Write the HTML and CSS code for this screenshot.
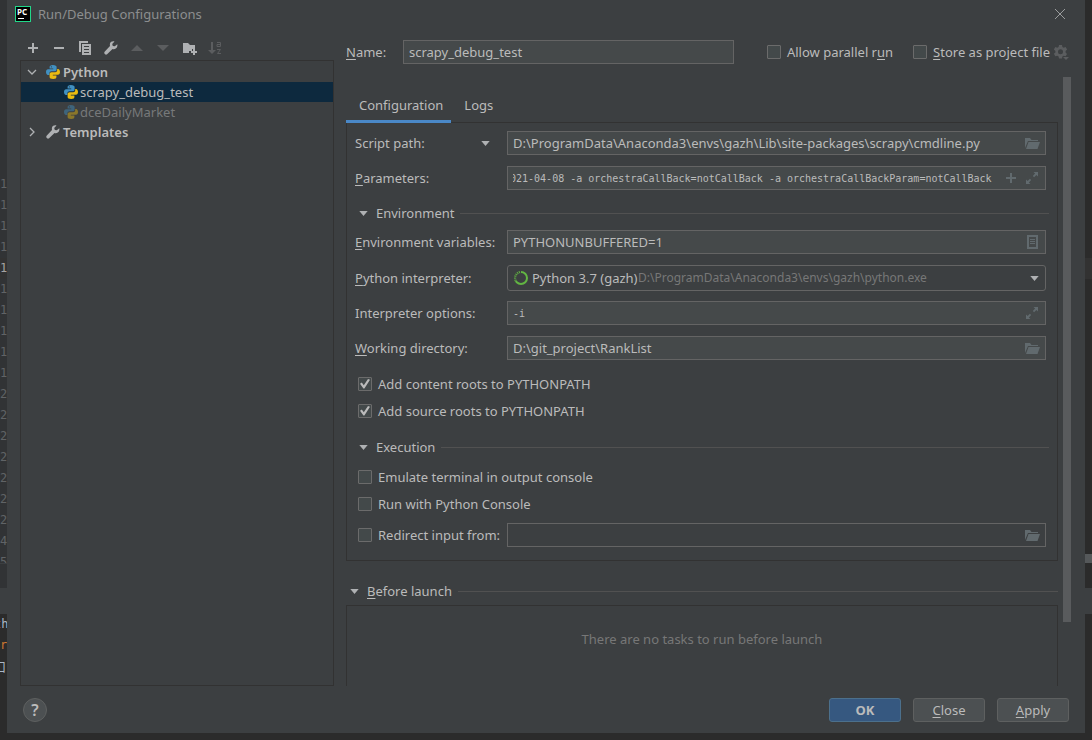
FILE: index.html
```html
<!DOCTYPE html>
<html lang="en">
<head>
<meta charset="utf-8">
<title>Run/Debug Configurations</title>
<link rel="stylesheet" href="styles.css">
</head>
<body>
<svg class="defs" aria-hidden="true">
  <symbol id="python" viewBox="0 0 16 16">
    <path fill="#4191c2" d="M7.800 1C5.400 1 4.600 2 4.600 3v1.600h3.600v.6H3.100C1.700 5.200 1 6.500 1 8s.7 3 2 3h1.400V9.300c0-1.200 1-2.100 2.100-2.100h3.300c1 0 1.800-.8 1.800-1.800V3c0-1-1-2-3.800-2z"/>
    <path fill="#eabb10" d="M8.300 15c2.300 0 3.100-1 3.100-2v-1.600H7.800v-.6h5.100C14.300 10.800 15 9.500 15 8s-.7-3-2-3h-.8v1.200c0 1.200-.9 2-2 2H6.500c-1 0-1.900.9-1.900 1.900V13c0 1 1 2 3.700 2z"/>
    <circle cx="6.400" cy="2.800" r=".6" fill="#3c3f41"/>
  </symbol>
  <symbol id="wrench" viewBox="0 0 16 16">
    <path d="M14.300 4.300l-2.500 2-2-.4-.6-2 2.300-2.400C9.600.900 7.500 1.800 7 3.600c-.3 1 0 1.800 0 2.400L1.600 11.800c-1.300 1.500.9 3.800 2.500 2.400L9.500 9c1 .3 2.400.3 3.600-.7 1.200-1 1.600-2.700 1.200-4z"/>
  </symbol>
  <symbol id="folder" viewBox="0 0 16 16">
    <path d="M1 13V3h5l1.500 2H14v1H4L1 13z"/><path d="M2 14l2.500-7H16l-2.500 7z"/>
  </symbol>
  <symbol id="expand" viewBox="0 0 16 16">
    <path d="M9.500 2H14v4.500l-1.600-1.600-2.300 2.300-1.300-1.300 2.300-2.300zM6.500 14H2V9.500l1.600 1.600 2.300-2.300 1.300 1.300-2.300 2.300z"/>
  </symbol>
  <symbol id="down" viewBox="0 0 10 6"><path d="M0 0h10L5 6z"/></symbol>
</svg>

<div class="desktop">
  <aside class="gutter">
    <ol class="lines">
      <li>1</li><li>1</li><li>1</li><li>1</li><li class="current">1</li><li>1</li><li>1</li><li>1</li><li>1</li><li>1</li>
      <li>2</li><li>2</li><li>2</li><li>2</li><li>2</li><li>2</li><li>2</li><li>4</li><li>5</li>
    </ol>
    <div class="band"></div>
    <div class="console"><div class="shifted"><b>t</b>h</div><div><b>r</b>:</div><div class="shifted cjk">口</div></div>
  </aside>

  <main class="dialog">
    <header class="title">
      <svg class="logo" viewBox="0 0 16 16"><path fill="#21d789" d="M0 0h16v16H0z"/><path fill="#000" d="M1 1h14v14H1z"/><path fill="#fff" d="M3 12h6v1H3z"/><text x="2" y="9">PC</text></svg>
      <h1>Run/Debug Configurations</h1>
      <button class="icon-button close" aria-label="Close window"><svg viewBox="0 0 12 12"><path d="M1 1l10 10M11 1L1 11"/></svg></button>
    </header>

    <div class="content">
      <section class="side">
        <div class="toolbar">
          <button class="icon-button" aria-label="Add"><svg viewBox="0 0 16 16"><path d="M7 3h2v4h4v2H9v4H7V9H3V7h4z"/></svg></button>
          <button class="icon-button" aria-label="Remove"><svg viewBox="0 0 16 16"><path d="M3 7h10v2H3z"/></svg></button>
          <button class="icon-button" aria-label="Copy"><svg viewBox="0 0 16 16"><path d="M2 1h9v2H4v9H2z"/><path fill-rule="evenodd" d="M5 4h9v11H5zM7 6v1h5V6zM7 9v1h5V9zM7 12v1h5v-1z"/></svg></button>
          <button class="icon-button" aria-label="Edit templates"><svg><use href="#wrench"/></svg></button>
          <button class="icon-button" aria-label="Move up" disabled><svg viewBox="0 0 16 16"><path d="M2 11l6-6 6 6z"/></svg></button>
          <button class="icon-button" aria-label="Move down" disabled><svg viewBox="0 0 16 16"><path d="M2 5h12l-6 6z"/></svg></button>
          <button class="icon-button" aria-label="Create folder"><svg viewBox="0 0 16 16"><path d="M2 3h5l2 2h5v4h-3v2H8v2H2z"/><path d="M12 9h2v2h2v2h-2v2h-2v-2h-2v-2h2z"/></svg></button>
          <button class="icon-button" aria-label="Sort" disabled><svg viewBox="0 0 16 16"><path d="M4 2h2v8h3l-4 4-4-4h3z"/><path class="thin" d="M10 2.500h3.500v4H10v-2h3M10 9.500h3.500l-3 4H14"/></svg></button>
        </div>
        <ul class="tree">
          <li class="group"><svg class="chevron" viewBox="0 0 10 10"><path d="M1 3l4 4 4-4"/></svg><svg class="node"><use href="#python"/></svg>Python</li>
          <li class="item selected"><svg class="node"><use href="#python"/></svg>scrapy_debug_test</li>
          <li class="item faded"><svg class="node"><use href="#python"/></svg>dceDailyMarket</li>
          <li class="group"><svg class="chevron" viewBox="0 0 10 10"><path d="M3 1l4 4-4 4"/></svg><svg class="node"><use href="#wrench"/></svg>Templates</li>
        </ul>
      </section>

      <section class="editor">
        <div class="name-row">
          <label for="name"><u>N</u>ame:</label>
          <input class="field" id="name" type="text" value="scrapy_debug_test">
          <label class="check"><input type="checkbox"><span>Allow parallel r<u>u</u>n</span></label>
          <label class="check store"><input type="checkbox"><span><u>S</u>tore as project file</span></label>
          <button class="icon-button gear" aria-label="Storage options" disabled><svg viewBox="0 0 16 16"><path fill-rule="evenodd" d="M6 1h3l.4 2 1.300.700L12.600 3l1.500 2.500L12.600 7v1.500L14 10l-1.400 2.300-2-.6-1.200.7L9 14.500H6l-.4-2.100-1.300-.7-2 .6L.9 9.800 2.400 8.500V7L.9 5.500 2.300 3l2 .7L5.600 3zM7.500 5.300a2.500 2.500 0 100 5 2.500 2.500 0 000-5z"/><path d="M10 13h6l-3 3z"/></svg></button>
        </div>

        <div class="scroll">
          <div class="page">
            <nav class="tabs"><button class="tab active">Configuration</button><button class="tab">Logs</button></nav>
            <div class="panel">
              <div class="row">
                <label class="script" for="script">Script path:<svg class="arrow"><use href="#down"/></svg></label>
                <div class="field"><input id="script" type="text" value="D:\ProgramData\Anaconda3\envs\gazh\Lib\site-packages\scrapy\cmdline.py"><svg class="trail"><use href="#folder"/></svg></div>
              </div>
              <div class="row">
                <label for="params"><u>P</u>arameters:</label>
                <div class="field"><input class="mono" id="params" type="text" value="021-04-08 -a orchestraCallBack=notCallBack -a orchestraCallBackParam=notCallBack"><svg class="trail plus" viewBox="0 0 16 16"><path d="M7 3h2v4h4v2H9v4H7V9H3V7h4z"/></svg><svg class="trail"><use href="#expand"/></svg></div>
              </div>
              <h2 class="section"><svg class="arrow"><use href="#down"/></svg>Environment</h2>
              <div class="row">
                <label for="env"><u>E</u>nvironment variables:</label>
                <div class="field"><input id="env" type="text" value="PYTHONUNBUFFERED=1"><svg class="trail" viewBox="0 0 16 16"><path fill-rule="evenodd" d="M3 1h11v14H3zM5 3v10h7V3z"/><path d="M6 5h5v1H6zM6 7h5v1H6zM6 9h5v1H6z"/></svg></div>
              </div>
              <div class="row interpreter">
                <label for="interp"><u>P</u>ython interpreter:</label>
                <div class="field combo"><svg class="ring" viewBox="0 0 16 16"><circle cx="8" cy="8" r="6"/><path d="M8 2a6 6 0 00-5.200 9"/></svg><select id="interp"><option>Python 3.7 (gazh)</option></select><span class="hint">D:\ProgramData\Anaconda3\envs\gazh\python.exe</span><svg class="arrow"><use href="#down"/></svg></div>
              </div>
              <div class="row">
                <label for="opts">Interpreter options:</label>
                <div class="field"><input class="mono" id="opts" type="text" value="-i"><svg class="trail"><use href="#expand"/></svg></div>
              </div>
              <div class="row">
                <label for="dir"><u>W</u>orking directory:</label>
                <div class="field"><input id="dir" type="text" value="D:\git_project\RankList"><svg class="trail"><use href="#folder"/></svg></div>
              </div>
              <div class="checks first">
                <label class="check"><input type="checkbox" checked><span>Add content roots to PYTHONPATH</span></label>
                <label class="check"><input type="checkbox" checked><span>Add source roots to PYTHONPATH</span></label>
              </div>
              <h2 class="section execution"><svg class="arrow"><use href="#down"/></svg>Execution</h2>
              <div class="checks">
                <label class="check"><input type="checkbox"><span>Emulate terminal in output console</span></label>
                <label class="check"><input type="checkbox"><span>Run with Python Console</span></label>
              </div>
              <div class="row redirect">
                <label class="check"><input type="checkbox"><span>Redirect input from:</span></label>
                <div class="field off"><input type="text" aria-label="Redirect input from" disabled><svg class="trail"><use href="#folder"/></svg></div>
              </div>
            </div>
            <h2 class="section before"><svg class="arrow"><use href="#down"/></svg><span><u>B</u>efore launch</span></h2>
            <div class="tasks">There are no tasks to run before launch</div>
          </div>
          <div class="bar"></div>
        </div>
      </section>
    </div>

    <footer class="footer">
      <button class="help" aria-label="Help">?</button>
      <button class="button primary">OK</button>
      <button class="button"><u>C</u>lose</button>
      <button class="button"><u>A</u>pply</button>
    </footer>
  </main>

  <aside class="edge"><div class="mark"></div><div class="split"></div><div class="header"></div></aside>
</div>
<script src="script.js"></script>
</body>
</html>
```
FILE: styles.css
```css
* { box-sizing: border-box; }
body {
  margin: 0;
  background: #2b2b2b;
  color: #bbbbbb;
  font: 13px/20px "Noto Sans", "Noto Sans CJK SC", sans-serif;
}
button, input, select { font: inherit; color: inherit; }
button { border: 0; padding: 0; background: none; }
h1, h2 { margin: 0; font: inherit; }
ul, ol { margin: 0; padding: 0; list-style: none; }
svg { fill: #afb1b3; flex: none; display: block; }
u { text-underline-offset: 2px; }
.defs { position: absolute; width: 0; height: 0; }

.desktop { display: flex; height: 100vh; padding-bottom: 7px; }

/* Editor behind the dialog */
.gutter {
  flex: 0 0 7px;
  display: flex;
  flex-direction: column;
  overflow: hidden;
  background: #313335;
  color: #606366;
  font: 12px/21px "DejaVu Sans Mono", monospace;
}
.lines { height: 564px; flex: none; padding-top: 174px; overflow: hidden; border-bottom: 1px solid #3c3f41; }
.current { color: #a4a3a3; background: #323232; }
.band { flex: none; height: 26px; margin-top: 24px; background: #3c3f41; }
.console { flex: 1; background: #2b2b2b; color: #a9b7c6; white-space: nowrap; }
.console b { color: #cc7832; font-weight: 400; }
.shifted { text-indent: -6px; }
.cjk { font-family: "Noto Sans CJK SC", sans-serif; }
.edge { flex: 0 0 7px; background: #2b2b2b; }
.edge .mark { height: 21px; margin-top: 258px; background: #323232; }
.edge .split { height: 9px; margin-top: 275px; background: #55585a; }
.edge .header { height: 26px; margin-top: 25px; background: #3c3f41; }

/* Dialog */
.dialog { flex: 1; min-width: 0; display: flex; flex-direction: column; background: #3c3f41; }
.title { display: flex; align-items: center; gap: 7px; height: 28px; padding: 0 19px 0 8px; color: #8c8e8f; }
.title h1 { flex: 1; }
.logo { width: 16px; height: 16px; }
.logo text { fill: #fff; font: bold 8px "Noto Sans", sans-serif; }
.icon-button svg { width: 16px; height: 16px; }
.icon-button:disabled svg { fill: #5b5d5f; }
.close svg { width: 12px; height: 12px; fill: none; stroke: #9a9c9d; }

.content { flex: 1; min-height: 0; display: flex; gap: 12px; padding: 0 14px 0 13px; }
.side { flex: 0 0 314px; display: flex; flex-direction: column; }
.toolbar { display: flex; align-items: center; gap: 10px; height: 32px; padding: 8px 5px 0; }
.icon-button:disabled .thin { fill: none; stroke: #5b5d5f; }
.tree { flex: 1; padding-top: 1px; border: 1px solid #323232; }
.tree li { display: flex; align-items: center; height: 20px; gap: 2px; }
.tree .group { padding-left: 6px; font-weight: 600; }
.tree .item { padding-left: 42px; gap: 1px; }
.tree .selected { background: #0d293e; }
.tree .faded { color: #77797a; }
.faded svg { opacity: .45; }
.node { width: 16px; height: 16px; }
.chevron { width: 10px; height: 10px; margin-right: 6px; fill: none; stroke: #afb1b3; stroke-width: 1.300; }

.editor { flex: 1; min-width: 0; display: flex; flex-direction: column; }
.name-row { display: flex; align-items: center; padding: 12px 2px 0 0; }
.name-row > label:first-child { width: 57px; }
.name-row > .field { flex: 1; min-width: 0; padding: 0 5px; margin-right: 33px; }
.name-row .store { margin-left: 20px; }
.gear { margin-left: 3px; }
.check { display: flex; align-items: center; gap: 6px; white-space: nowrap; }
.check input {
  appearance: none;
  display: grid;
  place-items: center;
  flex: none;
  width: 14px;
  height: 14px;
  margin: 0;
  border: 1px solid #6b6b6b;
  border-radius: 1px;
  background: #43494a;
}
.check input:checked::before {
  content: "";
  width: 10px;
  height: 10px;
  background: #bbbbbb;
  clip-path: polygon(0 48%, 18% 34%, 38% 62%, 80% 0, 100% 8%, 44% 96%, 34% 96%);
}

.field {
  display: flex;
  align-items: center;
  height: 24px;
  border: 1px solid #646464;
  background: #45494a;
}
.field input { flex: 1; min-width: 0; height: 22px; padding: 0; margin-left: 5px; border: 0; background: none; }
input:focus { outline: none; }
.field .mono { font: 10px/20px "DejaVu Sans Mono", monospace; }
.field.off { background: #3c3f41; }
.trail { width: 16px; height: 16px; margin: 0 5px 0 16px; fill: #616a6e; }
.plus { margin: 0 -11px 0 11px; }
.interpreter { margin-bottom: -1px; }
.field.combo { height: 26px; padding-left: 5px; border-radius: 3px; background: #3c3f41; }
.combo select { appearance: none; padding: 0; margin: 0 0 0 3px; border: 0; background: none; }
.combo .hint { flex: 1; color: #777777; font-size: 12px; }
.combo .arrow { margin-right: 6px; }
.ring { width: 16px; height: 16px; fill: none; stroke: #62b543; stroke-width: 2; }
.ring path { stroke: #3c3f41; stroke-dasharray: 1 1; }
.arrow { width: 9px; height: 5px; }

.scroll { flex: 1; min-height: 0; display: flex; gap: 5px; margin-top: 13px; overflow: hidden; }
.page { flex: 1; min-width: 0; display: flex; flex-direction: column; }
.bar { width: 8px; height: 545px; background: #595b5d; }
.tabs { position: relative; display: flex; flex: none; padding-top: 12px; }
.tab { height: 34px; padding: 0 13px; border-bottom: 3px solid transparent; }
.tab.active { padding: 0 8px 0 13px; border-color: #4a88c7; }
.panel { display: flex; flex-direction: column; gap: 11px; flex: none; margin-top: -1px; padding: 8px 11px 13px 8px; border: 1px solid #323232; }
.row { display: grid; grid-template-columns: 152px 1fr; align-items: center; }
.script { display: flex; align-items: center; justify-content: space-between; padding-right: 17px; }
.section { display: flex; align-items: center; height: 20px; }
.section .arrow { margin-right: 8px; }
.section::after { content: ""; flex: 1; height: 1px; margin-left: 6px; background: #515151; }
.panel .section { margin: 2px -3px -4px 4px; }
.checks { display: flex; flex-direction: column; gap: 7px; padding-left: 3px; }
.checks.first { margin-top: 3px; }
.panel .execution { margin: 5px -3px -1px 4px; }
.redirect { margin-top: -2px; }
.redirect .check { padding-left: 3px; }
.before { flex: none; margin-top: 20px; padding-left: 4px; }
.tasks { flex: none; height: 120px; margin-top: 4px; padding-top: 23px; border: 1px solid #323232; text-align: center; color: #777777; }

.footer { display: flex; align-items: center; gap: 12px; height: 47px; padding: 0 16px; }
.help { width: 24px; height: 24px; margin-right: auto; border: 1px solid #5e6060; border-radius: 50%; background: #4c5052; font-size: 16px; font-weight: 600; }
.button { width: 72px; height: 24px; border: 1px solid #5e6060; border-radius: 3px; background: #4c5052; }
.primary { border-color: #4c708c; background: #365880; font-weight: 700; }
```
FILE: script.js
```js
// Keep the end of the long parameter string in view.
const params = document.getElementById("params");
params.scrollLeft = params.scrollWidth;
```
